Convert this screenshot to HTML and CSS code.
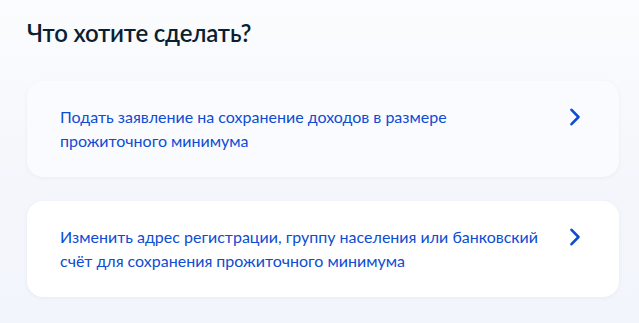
FILE: index.html
```html
<!DOCTYPE html>
<html>
<head>
    <meta charset="utf-8">
    <title>Что хотите сделать?</title>
    <link rel="stylesheet" href="styles.css">
</head>
<body>
    <h1 class="title">Что хотите сделать?</h1>
    <div class="choices">
        <a class="choice choice-hover" href="#">
            <span class="choice-text">Подать заявление на сохранение доходов в размере прожиточного минимума</span>
            <svg class="chevron" width="24" height="24" viewBox="0 0 24 24"><path d="M8.5 4.8l7 7.2-7 7.2" fill="none" stroke="#0d4cd3" stroke-width="2.6" stroke-linecap="round" stroke-linejoin="round"/></svg>
        </a>
        <a class="choice" href="#">
            <span class="choice-text">Изменить адрес регистрации, группу населения или банковский счёт для сохранения прожиточного минимума</span>
            <svg class="chevron" width="24" height="24" viewBox="0 0 24 24"><path d="M8.5 4.8l7 7.2-7 7.2" fill="none" stroke="#0d4cd3" stroke-width="2.6" stroke-linecap="round" stroke-linejoin="round"/></svg>
        </a>
    </div>
</body>
</html>
```
FILE: styles.css
```css
html, body {
    height: 100%;
}

body {
    margin: 0;
    padding: 17px 20px 0 27px;
    box-sizing: border-box;
    font-family: Lato, "Noto Sans", sans-serif;
    background: linear-gradient(180deg, #fbfcfe 0%, #f4f6fb 60%, #f2f5fb 100%);
    color: #0b1f33;
}

.title {
    margin: 0;
    font-size: 24px;
    line-height: 32px;
    font-weight: 600;
    letter-spacing: -0.2px;
    color: #0b1f33;
}

.choices {
    display: flex;
    flex-direction: column;
    gap: 24px;
    margin-top: 32px;
}

.choice {
    display: flex;
    align-items: flex-start;
    gap: 24px;
    padding: 24px 32px 24px 33px;
    background: #ffffff;
    border-radius: 16px;
    box-shadow: 0 1px 4px rgba(40, 70, 140, 0.06);
    text-decoration: none;
}

.choice-hover {
    background: #fafbff;
}

.choice-text {
    flex: 1;
    font-size: 16px;
    line-height: 24px;
    color: #0d4cd3;
}

.chevron {
    flex: none;
    display: block;
}
```
